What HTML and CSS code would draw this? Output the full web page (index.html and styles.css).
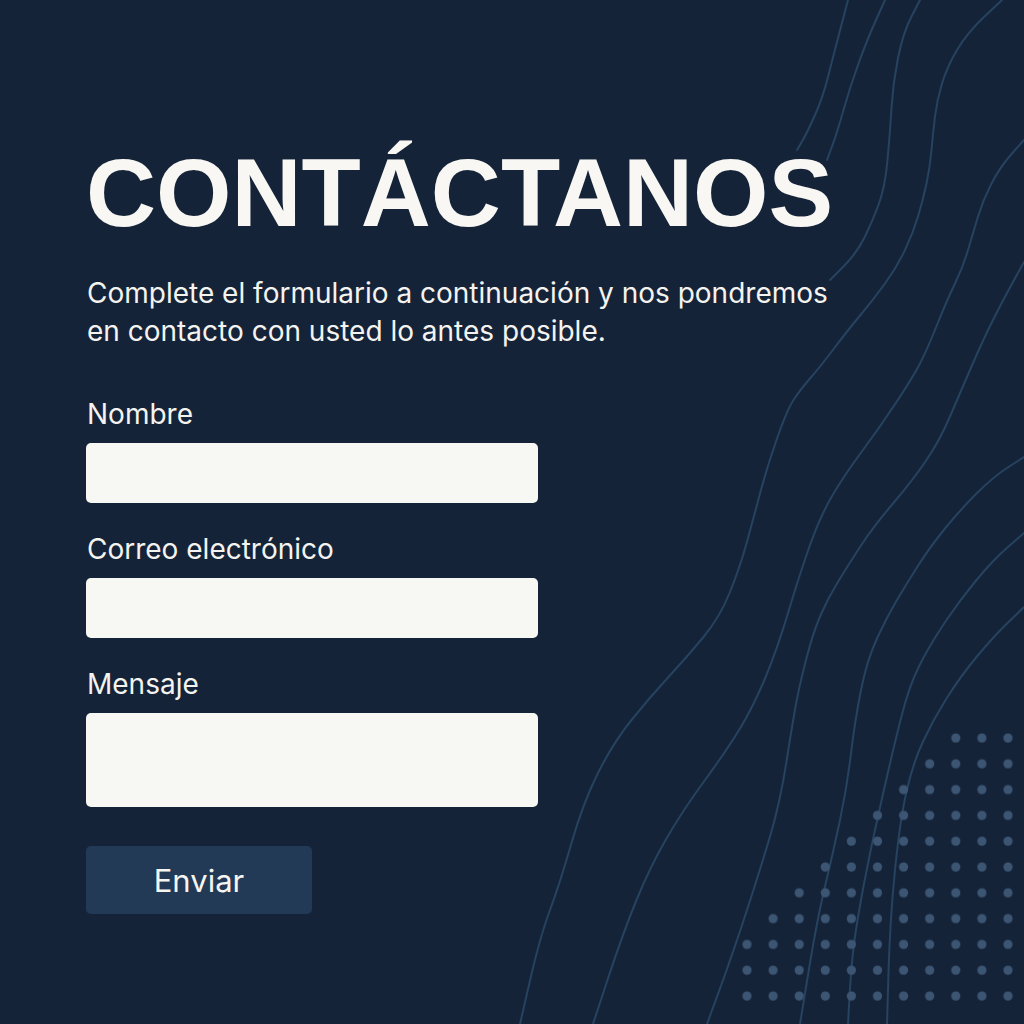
FILE: index.html
```html
<!DOCTYPE html>
<html lang="es">
<head>
<meta charset="utf-8">
<title>Contáctanos</title>
<link rel="stylesheet" href="styles.css">
</head>
<body>
<div class="page">
  <svg class="decor" width="1024" height="1024" viewBox="0 0 1024 1024" aria-hidden="true">
    <defs>
      <pattern id="dots" x="734" y="725" width="26.1" height="25.8" patternUnits="userSpaceOnUse">
        <circle cx="13" cy="13" r="4.6" fill="#3b5572"/>
      </pattern>
    </defs>
    <g class="waves" fill="none" stroke="#26435f" stroke-width="2" stroke-linejoin="round" stroke-linecap="round">
      <path d="M848,0 L840.5,28.5 Q833,57 828,77 Q823,97 815,115 Q807,133 802,141.5 L797,150"/>
      <path d="M885,0 L876,20 Q867,40 858.5,63.5 Q850,87 843.5,110 Q837,133 832,146.5 L827,160"/>
      <path d="M920,0 L911.5,16.5 Q903,33 898,58 Q893,83 891.5,108 Q890,133 887.5,160 Q885,187 879,203.5 Q873,220 865,236.5 Q857,253 843.5,266.5 L830,280"/>
      <path d="M1002,0 L984.5,16.5 Q967,33 957,50 Q947,67 942,83.5 Q937,100 935,116.5 Q933,133 931.5,150 Q930,167 926.5,183.5 Q923,200 918,216.5 Q913,233 905,250 Q897,267 885,283.5 Q873,300 860.5,315 Q848,330 834,348.5 Q820,367 810,378.5 Q800,390 793.5,400 Q787,410 777,438.5 Q767,467 760,493.5 Q753,520 746.5,543.5 Q740,567 730,592 Q720,617 703.5,637 Q687,657 668.5,677 Q650,697 631.5,720 Q613,743 598,773 Q583,803 571.5,843 Q560,883 550,910 Q540,937 530,980.5 L520,1024"/>
      <path d="M1024,140 L1012,153.5 Q1000,167 991.5,183.5 Q983,200 978,216.5 Q973,233 968,250 Q963,267 955,283.5 Q947,300 937,325 Q927,350 920,363.5 Q913,377 896.5,402 Q880,427 861.5,452 Q843,477 831.5,497 Q820,517 810,545 Q800,573 788.5,611.5 Q777,650 765,678.5 Q753,707 740,728.5 Q727,750 705,780 Q683,810 666.5,838.5 Q650,867 636.5,900 Q623,933 608,978.5 L593,1024"/>
      <path d="M1024,262 L1013.5,281 Q1003,300 993,320 Q983,340 971.5,366.5 Q960,393 950,416.5 Q940,440 926.5,460 Q913,480 893,503.5 Q873,527 860,547 Q847,567 837,583.5 Q827,600 820,616.5 Q813,633 806.5,658 Q800,683 796.5,701.5 Q793,720 786.5,761.5 Q780,803 770,836.5 Q760,870 746.5,911.5 Q733,953 720,988.5 L707,1024"/>
      <path d="M1024,457 L1008.5,467 Q993,477 976.5,493.5 Q960,510 945,528.5 Q930,547 918.5,565 Q907,583 897,600 Q887,617 877,638.5 Q867,660 861,690 Q855,720 851,753.5 Q847,787 840,820 Q833,853 825,886.5 Q817,920 808.5,972 L800,1024"/>
      <path d="M1024,533 L1008.5,546.5 Q993,560 976.5,580 Q960,600 946.5,620 Q933,640 923,658.5 Q913,677 906.5,698.5 Q900,720 888.5,770 Q877,820 870,853.5 Q863,887 857.5,920 Q852,953 850,988.5 L848,1024"/>
      <path d="M1024,607 L1008.5,622 Q993,637 976.5,657 Q960,677 946.5,698.5 Q933,720 923,741.5 Q913,763 906.5,791.5 Q900,820 895,870 Q890,920 888.5,972 L887,1024"/>
    </g>
    <polygon fill="url(#dots)" points="942.8,725 1024,725 1024,1009 734,1009 734,931.4 760.1,931.4 760.1,905.6 786.2,905.6 786.2,879.8 812.3,879.8 812.3,854 838.4,854 838.4,828.2 864.5,828.2 864.5,802.4 890.6,802.4 890.6,776.6 916.7,776.6 916.7,750.8 942.8,750.8"/>
  </svg>

  <main class="content">
    <h1 class="title">CONTÁCTANOS</h1>
    <p class="intro">Complete el formulario a continuación y nos pondremos<br>en contacto con usted lo antes posible.</p>
    <form class="form" onsubmit="return false">
      <div class="field">
        <label class="label" for="nombre">Nombre</label>
        <input class="input" id="nombre" type="text">
      </div>
      <div class="field">
        <label class="label" for="correo">Correo electrónico</label>
        <input class="input" id="correo" type="email">
      </div>
      <div class="field">
        <label class="label" for="mensaje">Mensaje</label>
        <textarea class="input textarea" id="mensaje"></textarea>
      </div>
      <button class="button" type="submit">Enviar</button>
    </form>
  </main>
</div>
</body>
</html>
```

FILE: styles.css
```css
* { box-sizing: border-box; }

html, body {
  margin: 0;
  padding: 0;
  background: #152339;
}

.page {
  position: relative;
  width: 1024px;
  height: 1024px;
  overflow: hidden;
  background: #152339;
  color: #f6f5f0;
  font-family: Inter, "Liberation Sans", sans-serif;
}

.decor {
  position: absolute;
  left: 0;
  top: 0;
}

.content {
  position: relative;
  padding: 144px 0 0 86px;
}

.title {
  margin: 0;
  font-family: "Liberation Sans", Arial, sans-serif;
  font-weight: 700;
  font-size: 97px;
  line-height: 97px;
  letter-spacing: 0;
  color: #f8f7f3;
}

.intro {
  margin: 33px 0 0 1px;
  font-size: 28px;
  line-height: 38px;
  font-weight: 400;
  color: #f4f3ef;
}

.form {
  margin-top: 48px;
  display: flex;
  flex-direction: column;
  width: 452px;
}

.field {
  display: flex;
  flex-direction: column;
  margin-bottom: 30px;
}

.field:last-of-type {
  margin-bottom: 39px;
}

.label {
  font-size: 28px;
  line-height: 32px;
  margin: 0 0 13px 1px;
  color: #f4f3ef;
}

.input {
  width: 452px;
  height: 60px;
  border: none;
  border-radius: 5px;
  background: #f7f7f4;
  font: inherit;
  padding: 0 16px;
  outline: none;
}

.textarea {
  height: 94px;
  resize: none;
  display: block;
}

.button {
  width: 226px;
  height: 68px;
  border: none;
  border-radius: 5px;
  background: #223a55;
  color: #f6f5f0;
  font-family: Inter, "Liberation Sans", sans-serif;
  font-size: 31px;
  font-weight: 400;
  padding: 0;
  cursor: pointer;
}
```
